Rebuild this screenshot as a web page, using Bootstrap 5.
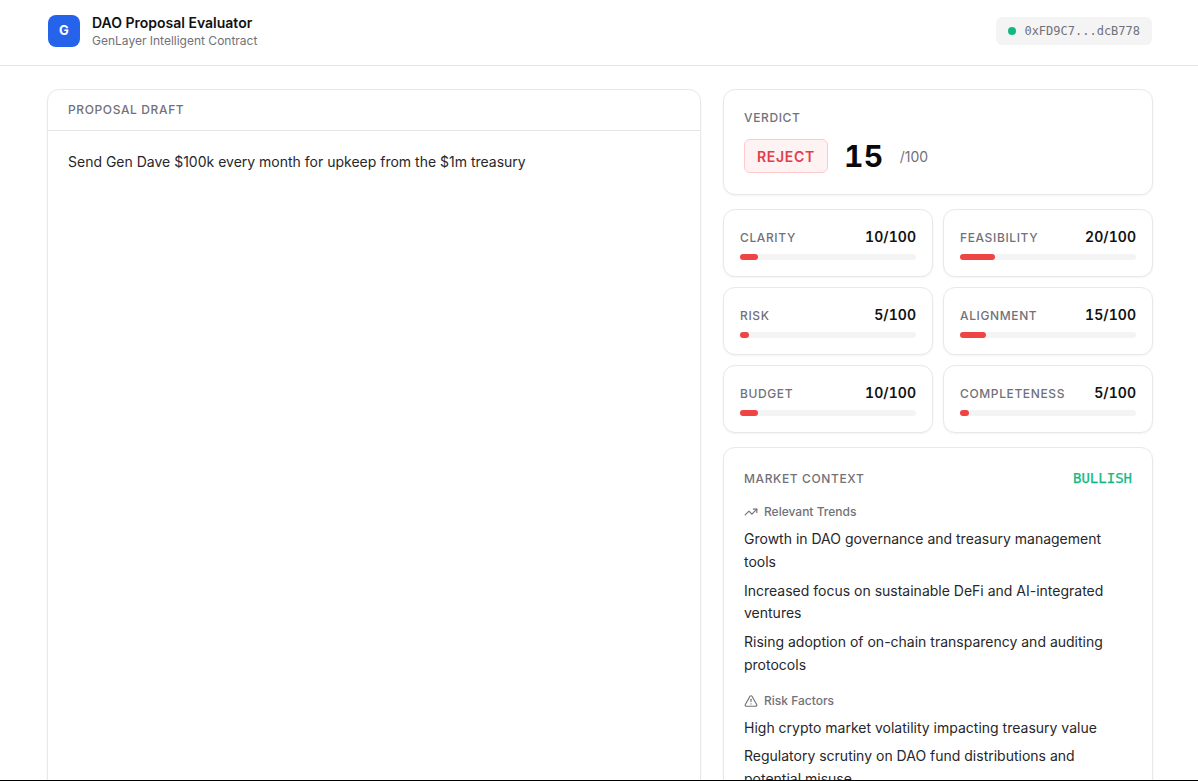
<!DOCTYPE html>
<html lang="en">
<head>
<meta charset="utf-8">
<title>DAO Proposal Evaluator</title>
<link href="https://cdn.jsdelivr.net/npm/bootstrap@5.3.0/dist/css/bootstrap.min.css" rel="stylesheet">
<style>
html,body{height:781px;overflow:hidden;background:#fff}
body{font-family:Inter,"Liberation Sans",sans-serif;color:#18181b}
.shell{height:781px;overflow:hidden;border-bottom:1px solid #000}
.topbar{height:66px;padding:0 46px 4px 48px;border-bottom:1px solid #e5e5e5}
.logo{width:32px;height:32px;border-radius:8px;background:#2563eb;color:#fff;font-size:13px;font-weight:700}
.app-title{font-size:14px;font-weight:600;line-height:20px;color:#111113}
.app-sub{font-size:12px;line-height:16px;color:#71717a}
.wallet{height:28px;padding:0 12px;gap:8px;background:#f4f4f5;border-radius:6px;font-family:"DejaVu Sans Mono","Liberation Mono",monospace;font-size:12px;color:#71717a}
.dot{width:8px;height:8px;border-radius:50%;background:#10b981}
.main-grid{display:grid;grid-template-columns:654px 430px;column-gap:22px;padding:23px 45px 0 47px;align-items:start}
.panel{border:1px solid #e8e8e8;border-radius:12px;background:#fff;box-shadow:0 1px 2px rgba(0,0,0,.05)}
.draft{height:900px}
.draft-head{height:41px;padding:0 20px;border-bottom:1px solid #e5e5e5}
.caps{font-size:12px;font-weight:500;letter-spacing:.62px;color:#71717a;text-transform:uppercase;line-height:16px}
.draft-body{padding:19px 20px;font-size:14px;line-height:23px;color:#27272a}
.verdict{height:106px;padding:20px;margin-bottom:14px}
.verdict-row{margin-top:13px}
.reject{height:34px;padding:0 12px;border:1px solid #fecaca;background:#fef2f2;color:#e03e48;border-radius:6px;font-size:14px;font-weight:600;letter-spacing:.7px}
.score{font-size:30px;font-weight:700;color:#09090b;line-height:34px;letter-spacing:.5px;font-variant-numeric:tabular-nums}
.out-of{font-size:14px;color:#71717a}
.metrics{display:grid;grid-template-columns:210px 210px;gap:10px;margin-bottom:14px}
.metric{height:68px;padding:17px 16px 0}
.metric-head{height:20px}
.metric-value{font-size:14px;font-weight:600;color:#111113;line-height:20px;font-variant-numeric:tabular-nums;letter-spacing:.05px}
.track{height:6px;background:#f4f4f5;border-radius:3px;margin-top:7px}
.fill{height:6px;background:#ef4444;border-radius:3px}
.market{padding:20px}
.market-head{margin-bottom:15px}
.bullish{font-family:"DejaVu Sans Mono","Liberation Mono",monospace;font-size:14px;font-weight:400;color:#10b981;-webkit-text-stroke:.25px #10b981}
.sub-head{font-size:12px;font-weight:500;line-height:16px;color:#71717a;gap:6px}
.sub-head svg{width:14px;height:14px}
.market p{font-size:14px;line-height:22.75px;margin:0 0 6px;color:#27272a}
</style>
</head>
<body>
<div class="shell">
  <header class="topbar d-flex align-items-center justify-content-between">
    <div class="d-flex align-items-center gap-2">
      <div class="logo d-flex align-items-center justify-content-center me-1">G</div>
      <div>
        <div class="app-title">DAO Proposal Evaluator</div>
        <div class="app-sub">GenLayer Intelligent Contract</div>
      </div>
    </div>
    <div class="wallet d-flex align-items-center"><span class="dot"></span><span>0xFD9C7...dcB778</span></div>
  </header>
  <main class="main-grid">
    <section class="panel draft">
      <div class="draft-head caps d-flex align-items-center">Proposal Draft</div>
      <div class="draft-body">Send Gen Dave $100k every month for upkeep from the $1m treasury</div>
    </section>
    <aside>
      <div class="panel verdict">
        <div class="caps">Verdict</div>
        <div class="verdict-row d-flex align-items-center">
          <span class="reject d-flex align-items-center">REJECT</span>
          <span class="score ms-3">15</span>
          <span class="out-of ms-3">/100</span>
        </div>
      </div>
      <div class="metrics">
        <div class="panel metric"><div class="metric-head d-flex justify-content-between align-items-baseline"><span class="caps">Clarity</span><span class="metric-value">10/100</span></div><div class="track"><div class="fill" style="width:10%"></div></div></div>
        <div class="panel metric"><div class="metric-head d-flex justify-content-between align-items-baseline"><span class="caps">Feasibility</span><span class="metric-value">20/100</span></div><div class="track"><div class="fill" style="width:20%"></div></div></div>
        <div class="panel metric"><div class="metric-head d-flex justify-content-between align-items-baseline"><span class="caps">Risk</span><span class="metric-value">5/100</span></div><div class="track"><div class="fill" style="width:5%"></div></div></div>
        <div class="panel metric"><div class="metric-head d-flex justify-content-between align-items-baseline"><span class="caps">Alignment</span><span class="metric-value">15/100</span></div><div class="track"><div class="fill" style="width:15%"></div></div></div>
        <div class="panel metric"><div class="metric-head d-flex justify-content-between align-items-baseline"><span class="caps">Budget</span><span class="metric-value">10/100</span></div><div class="track"><div class="fill" style="width:10%"></div></div></div>
        <div class="panel metric"><div class="metric-head d-flex justify-content-between align-items-baseline"><span class="caps">Completeness</span><span class="metric-value">5/100</span></div><div class="track"><div class="fill" style="width:5%"></div></div></div>
      </div>
      <div class="panel market">
        <div class="market-head d-flex justify-content-between align-items-center"><span class="caps">Market Context</span><span class="bullish">BULLISH</span></div>
        <div class="sub-head d-flex align-items-center mb-2">
          <svg viewBox="0 0 24 24" fill="none" stroke="currentColor" stroke-width="2" stroke-linecap="round" stroke-linejoin="round"><path d="M22 7l-8.5 8.5-5-5L2 17"/><path d="M16 7h6v6"/></svg>
          <span>Relevant Trends</span>
        </div>
        <p>Growth in DAO governance and treasury management tools</p>
        <p>Increased focus on sustainable DeFi and AI-integrated ventures</p>
        <p>Rising adoption of on-chain transparency and auditing protocols</p>
        <div class="sub-head d-flex align-items-center mb-2 mt-3">
          <svg viewBox="0 0 24 24" fill="none" stroke="currentColor" stroke-width="2" stroke-linecap="round" stroke-linejoin="round"><path d="M21.73 18l-8-14a2 2 0 0 0-3.48 0l-8 14A2 2 0 0 0 4 21h16a2 2 0 0 0 1.73-3z"/><path d="M12 9v4"/><path d="M12 17h.01"/></svg>
          <span>Risk Factors</span>
        </div>
        <p>High crypto market volatility impacting treasury value</p>
        <p>Regulatory scrutiny on DAO fund distributions and potential misuse</p>
      </div>
    </aside>
  </main>
</div>
<script src="https://cdn.jsdelivr.net/npm/bootstrap@5.3.0/dist/js/bootstrap.bundle.min.js"></script>
</body>
</html>
